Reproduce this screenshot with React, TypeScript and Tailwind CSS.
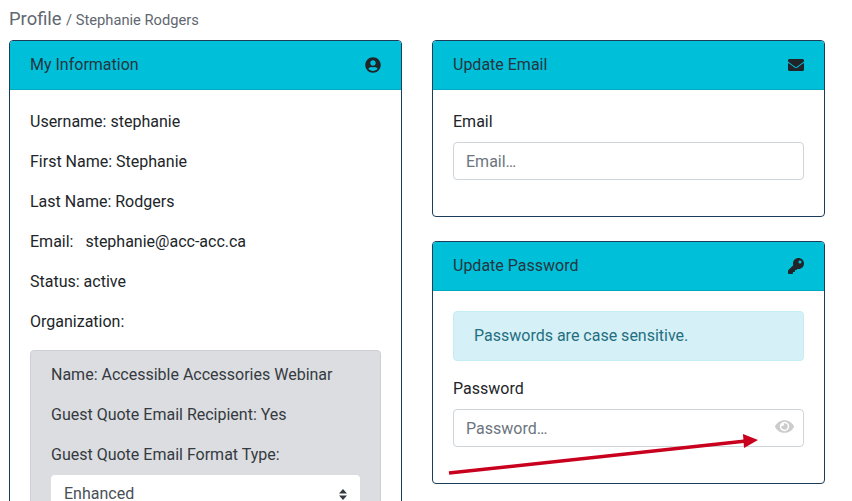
import type { ReactNode } from "react"
import { FaEnvelope, FaEye, FaKey, FaUserCircle } from "react-icons/fa"

function Card({ title, icon, children }: { title: string; icon: ReactNode; children: ReactNode }) {
  return (
    <div className="rounded-[4px] border border-[#1c3d5a] bg-white">
      <div className="flex h-[49px] items-center justify-between rounded-t-[3px] border-b border-[#00a9bf] bg-[#00c0d9] px-5 text-[#24353f]">
        <span>{title}</span>
        {icon}
      </div>
      <div className="p-5">{children}</div>
    </div>
  )
}

function Field({ label, placeholder, children }: { label: string; placeholder: string; children?: ReactNode }) {
  return (
    <div className="mb-4">
      <label className="mb-2 block text-[#212529]">{label}</label>
      <div className="relative">
        <input
          placeholder={placeholder}
          className="block h-[38px] w-full rounded-[4px] border border-[#ced4da] bg-white px-3 text-[#495057] outline-none placeholder:text-[#6c757d]"
        />
        {children}
      </div>
    </div>
  )
}

export default function App() {
  return (
    <div className="relative h-[501px] overflow-hidden bg-white font-['Roboto',sans-serif] text-base leading-6 text-[#212529]">
      <div className="flex h-10 items-start pl-[9px] pt-[7px] text-[#5f6770]">
        <span className="text-[18.4px] leading-6">Profile</span>
        <span className="ml-[4.5px] mt-[1px] text-[14.7px] leading-6">/ Stephanie Rodgers</span>
      </div>

      <div className="flex items-start gap-[30px] pl-[9px]">
        <div className="w-[393px] shrink-0">
          <Card title="My Information" icon={<FaUserCircle className="text-base text-[#212529]" />}>
            <div className="flex flex-col gap-4">
              <p>Username: stephanie</p>
              <p>First Name: Stephanie</p>
              <p>Last Name: Rodgers</p>
              <p className="whitespace-pre">Email:   stephanie@acc-acc.ca</p>
              <p>Status: active</p>
              <p>Organization:</p>
              <div className="rounded-[4px] border border-[#ced0d6] bg-[#dcdde1] px-5 py-3 text-[#343a40]">
                <div className="flex flex-col gap-4">
                  <p>Name: Accessible Accessories Webinar</p>
                  <p>Guest Quote Email Recipient: Yes</p>
                  <p>Guest Quote Email Format Type:</p>
                </div>
                <div className="mt-[8px] flex h-[38px] items-center justify-between rounded-[4px] bg-white pl-[13px] pr-[13px] text-[#495057]">
                  <span>Enhanced</span>
                  <svg width="8" height="11" viewBox="0 0 8 11" fill="#343a40">
                    <path d="M4 0 8 4.500H0zM4 11 0 6.500h8z" />
                  </svg>
                </div>
              </div>
            </div>
          </Card>
        </div>

        <div className="flex w-[393px] shrink-0 flex-col gap-6">
          <Card title="Update Email" icon={<FaEnvelope className="text-base text-[#212529]" />}>
            <Field label="Email" placeholder="Email…" />
          </Card>

          <Card title="Update Password" icon={<FaKey className="text-base text-[#212529]" />}>
            <div className="mb-4 rounded-[4px] border border-[#c4ecf5] bg-[#d6f0f7] px-5 py-3 text-[#1f6f80]">
              Passwords are case sensitive.
            </div>
            <Field label="Password" placeholder="Password…">
              <FaEye className="absolute right-[10px] top-[8px] text-[19px] text-[#cccccc]" />
            </Field>
          </Card>
        </div>
      </div>

      {/* red annotation arrow drawn over the password card */}
      <svg className="absolute left-[440px] top-[425px]" width="330" height="55" viewBox="0 0 330 55">
        <path d="M9 48 306 16" stroke="#c8001e" strokeWidth="3.500" fill="none" />
        <path d="M318 15 303 9 304 23z" fill="#c8001e" />
      </svg>
    </div>
  )
}
